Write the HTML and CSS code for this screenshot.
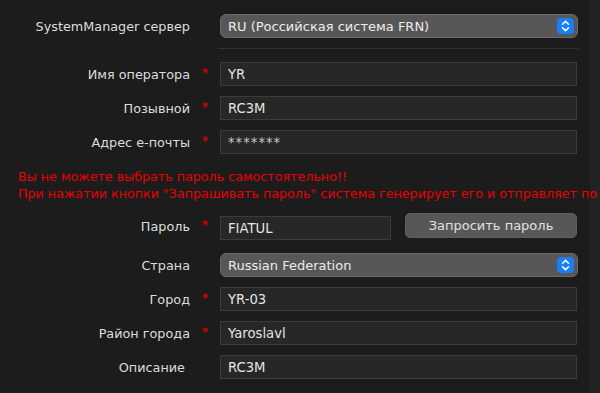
FILE: index.html
```html
<!DOCTYPE html>
<html lang="ru">
<head>
<meta charset="utf-8">
<title>Регистрация</title>
<link rel="stylesheet" href="styles.css">
</head>
<body>
<div class="page">
  <div class="form">
    <div class="row">
      <span class="label">SystemManager сервер</span>
      <span class="star"></span>
      <div class="select">
        <span class="select-text">RU (Российская система FRN)</span>
        <span class="arrows"><svg width="17" height="16" viewBox="0 0 17 16"><path d="M5.5 6.2 L8.5 3.4 L11.5 6.2 M5.5 9.8 L8.5 12.6 L11.5 9.8" fill="none" stroke="#fff" stroke-width="1.5" stroke-linecap="round" stroke-linejoin="round"/></svg></span>
      </div>
    </div>
    <div class="sep"></div>
    <div class="row">
      <span class="label">Имя оператора</span>
      <span class="star">*</span>
      <div class="input">YR</div>
    </div>
    <div class="row">
      <span class="label">Позывной</span>
      <span class="star">*</span>
      <div class="input">RC3M</div>
    </div>
    <div class="row">
      <span class="label">Адрес е-почты</span>
      <span class="star">*</span>
      <div class="input input-pass">*******</div>
    </div>
    <div class="notice">
      <div>Вы не можете выбрать пароль самостоятельно!!</div>
      <div>При нажатии кнопки "Запрашивать пароль" система генерирует его и отправляет по</div>
    </div>
    <div class="row row-pass">
      <span class="label">Пароль</span>
      <span class="star">*</span>
      <div class="input input-short">FIATUL</div>
      <div class="button">Запросить пароль</div>
    </div>
    <div class="row row-country">
      <span class="label">Страна</span>
      <span class="star"></span>
      <div class="select">
        <span class="select-text">Russian Federation</span>
        <span class="arrows"><svg width="17" height="16" viewBox="0 0 17 16"><path d="M5.5 6.2 L8.5 3.4 L11.5 6.2 M5.5 9.8 L8.5 12.6 L11.5 9.8" fill="none" stroke="#fff" stroke-width="1.5" stroke-linecap="round" stroke-linejoin="round"/></svg></span>
      </div>
    </div>
    <div class="row">
      <span class="label">Город</span>
      <span class="star">*</span>
      <div class="input">YR-03</div>
    </div>
    <div class="row">
      <span class="label">Район города</span>
      <span class="star">*</span>
      <div class="input">Yaroslavl</div>
    </div>
    <div class="row row-desc">
      <span class="label label-nostar">Описание</span>
      <span class="star"></span>
      <div class="input">RC3M</div>
    </div>
  </div>
</div>
</body>
</html>
```
FILE: styles.css
```css
html, body {
  margin: 0;
  padding: 0;
  width: 600px;
  height: 393px;
  overflow: hidden;
  background: #232323;
}
.page {
  display: flex;
  height: 393px;
  font-family: "DejaVu Sans", Verdana, sans-serif;
  font-size: 12.8px;
  color: #dcdcdc;
}
.form {
  width: 590px;
  flex: none;
  background: #1c1c1c;
  padding-top: 14px;
  box-sizing: border-box;
}
.row {
  display: flex;
  align-items: center;
  height: 24px;
  margin-bottom: 10px;
}
.label {
  width: 190px;
  text-align: right;
  white-space: nowrap;
}
.label-nostar {
  padding-right: 5px;
  box-sizing: border-box;
}
.star {
  width: 30px;
  text-align: center;
  color: #d40000;
  font-size: 12px;
  font-weight: bold;
  position: relative;
  top: -1px;
}
.input {
  width: 357px;
  height: 24px;
  box-sizing: border-box;
  background: #272727;
  border: 1px solid #3b3b3b;
  padding: 0 7px;
  display: flex;
  align-items: center;
  font-size: 13.2px;
  color: #e4e4e4;
}
.input-pass {
  letter-spacing: 1px;
  color: #c8c8c8;
}
.input-short {
  width: 171px;
}
.select {
  width: 358px;
  height: 24px;
  box-sizing: border-box;
  background: #575757;
  border: 1px solid #6a6a6a;
  border-radius: 6px;
  display: flex;
  align-items: center;
  justify-content: space-between;
  padding: 0 3px 0 7px;
  font-size: 13px;
  color: #ececec;
}
.arrows {
  width: 17px;
  height: 16px;
  background: #1a7ff7;
  border-radius: 4px;
  display: flex;
}
.sep {
  width: 360px;
  height: 1px;
  background: #333333;
  margin: 10px 0 13px 218px;
}
.notice {
  margin: 14px 0 11px 18px;
  color: #e80000;
  font-size: 12.7px;
  line-height: 17px;
  white-space: nowrap;
}
.row-pass {
  height: 27px;
  align-items: flex-start;
  margin-bottom: 13px;
}
.row-pass .label,
.row-pass .star {
  margin-top: 6px;
}
.row-pass .input {
  margin-top: 3px;
}
.button {
  width: 172px;
  height: 25px;
  margin-left: 14px;
  box-sizing: border-box;
  background: #575757;
  border: 1px solid #5f5f5f;
  border-radius: 5px;
  display: flex;
  align-items: center;
  justify-content: center;
  font-size: 13px;
  color: #e0e0e0;
}
.row-desc {
  margin-top: 1px;
}
```
